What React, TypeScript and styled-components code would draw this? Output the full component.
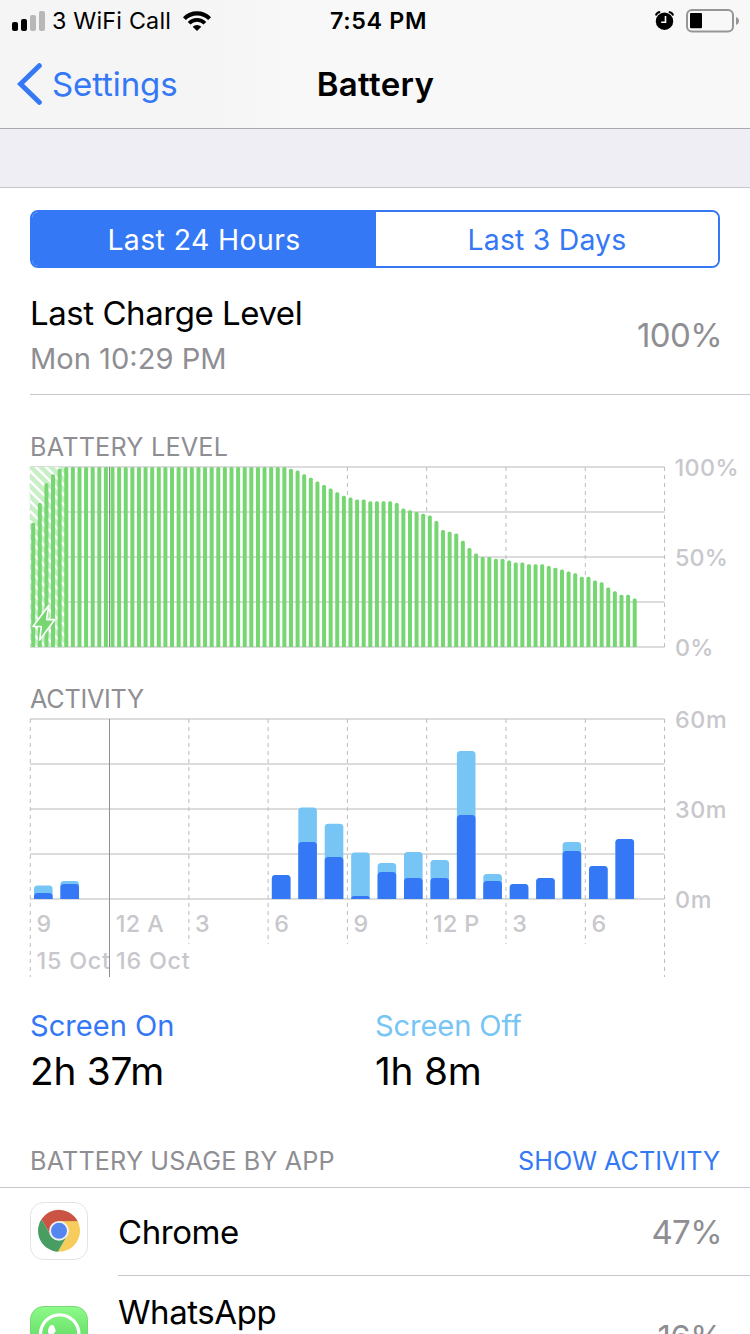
import React from "react";
import styled, { createGlobalStyle } from "styled-components";

const BLUE = "#3478f6";
const SKY = "#76c5f5";
const GREEN = "#76d672";
const GRAY = "#8e8e93";
const HAIRLINE = "#c8c7cc";

const GlobalStyle = createGlobalStyle`
  *, *::before, *::after { box-sizing: border-box; }
  html, body { margin: 0; height: 1334px; overflow: hidden; background: #fff; }
  body { font-family: Inter, "Liberation Sans", sans-serif; color: #000; }
`;

const Screen = styled.div`
  display: flex;
  flex-direction: column;
  width: 750px;
  height: 1334px;
  overflow: hidden;
  background: #fff;
  white-space: nowrap;
`;

const Header = styled.header`
  flex: none;
  height: 129px;
  border-bottom: 1px solid #a9a9ac;
  background: linear-gradient(90deg, #f5f5f5 0, #f5f5f5 200px, #f8f8f8 300px);
`;

const StatusBar = styled.div`
  display: grid;
  grid-template-columns: 1fr auto 1fr;
  align-items: center;
  height: 41px;
  padding: 0 10px 0 12px;
  font-size: 23.3px;
  line-height: 41px;
`;

const Carrier = styled.div`
  display: flex;
  align-items: center;
  letter-spacing: 0.2px;
`;

const CarrierName = styled.span`
  margin: 0 11px 0 7px;
`;

const Clock = styled.div`
  padding-left: 5px;
  font-weight: 600;
  letter-spacing: 0.65px;
`;

const StatusIcons = styled.div`
  display: flex;
  justify-content: flex-end;
  align-items: center;
  gap: 11px;
`;

const NavBar = styled.nav`
  display: grid;
  grid-template-columns: 1fr auto 1fr;
  align-items: center;
  height: 87px;
  padding: 0 17px;
  line-height: 87px;
`;

const Back = styled.a`
  display: flex;
  align-items: center;
  gap: 10px;
  color: ${BLUE};
  font-size: 33px;
  letter-spacing: -0.1px;

  svg {
    margin-bottom: 2px;
  }
`;

const Title = styled.h1`
  margin: 0;
  padding-left: 1px;
  font-size: 33px;
  font-weight: 600;
  letter-spacing: 0.35px;
`;

const Gap = styled.div`
  flex: none;
  height: 59px;
  border-bottom: 1px solid ${HAIRLINE};
  background: #efeef4;
`;

const Segments = styled.div`
  flex: none;
  display: grid;
  grid-template-columns: 344px 1fr;
  height: 58px;
  margin: 22px 30px 0;
  overflow: hidden;
  border: 2px solid ${BLUE};
  border-radius: 8px;
`;

const Segment = styled.button<{ $active?: boolean }>`
  border: 0;
  padding: 2px 0 0;
  font: 400 28.4px/52px Inter, "Liberation Sans", sans-serif;
  letter-spacing: ${(p) => (p.$active ? 0.4 : 0.2)}px;
  color: ${(p) => (p.$active ? "#fff" : BLUE)};
  background: ${(p) => (p.$active ? BLUE : "#fff")};
`;

const ChargeRow = styled.section`
  flex: none;
  display: flex;
  justify-content: space-between;
  align-items: center;
  height: 127px;
  margin-left: 30px;
  padding: 8px 30px 0 0;
  border-bottom: 1px solid ${HAIRLINE};
`;

const ChargeTitle = styled.div`
  font-size: 33px;
  line-height: 44px;
  letter-spacing: -0.45px;
`;

const ChargeTime = styled.div`
  margin-top: 4px;
  font-size: 29.1px;
  line-height: 40px;
  color: ${GRAY};
`;

const Percent = styled.div`
  margin-right: -2px;
  font-size: 33px;
  line-height: 44px;
  letter-spacing: -0.6px;
  color: ${GRAY};
`;

const ChartBlock = styled.section<{ $top: number }>`
  flex: none;
  padding: ${(p) => p.$top}px 0 0 30px;
`;

const Caption = styled.h2<{ $spacing: number }>`
  margin: 0;
  font-size: 25.2px;
  font-weight: 400;
  line-height: 32px;
  letter-spacing: ${(p) => p.$spacing}px;
  color: ${GRAY};
`;

const Chart = styled.svg`
  display: block;
  width: 720px;
  overflow: visible;

  text {
    font: 500 23.3px Inter, "Liberation Sans", sans-serif;
    fill: #c7c7cc;
  }
`;

const Totals = styled.section`
  flex: none;
  display: grid;
  grid-template-columns: 1fr 1fr;
  padding: 28px 30px 0;
`;

const TotalLabel = styled.div<{ $color: string; $spacing: number }>`
  font-size: 29.1px;
  line-height: 36px;
  letter-spacing: ${(p) => p.$spacing}px;
  color: ${(p) => p.$color};
`;

const TotalValue = styled.div`
  margin: 3px 0 1px;
  font-size: 38.8px;
  line-height: 48px;
  letter-spacing: -0.25px;
`;

const ListHeader = styled.div`
  flex: none;
  display: flex;
  justify-content: space-between;
  align-items: flex-end;
  height: 92px;
  padding: 0 30px 10px;
  border-bottom: 1px solid ${HAIRLINE};
`;

const ShowActivity = styled.a`
  font-size: 25.2px;
  line-height: 32px;
  color: ${BLUE};
`;

const AppRow = styled.div<{ $tall?: boolean }>`
  flex: none;
  display: flex;
  height: ${(p) => (p.$tall ? 122 : 88)}px;
  padding-left: 30px;
`;

const AppIcon = styled.svg<{ $tall?: boolean }>`
  flex: none;
  width: 58px;
  height: 58px;
  margin-top: ${(p) => (p.$tall ? 30 : 14)}px;
`;

const AppBody = styled.div`
  flex: 1;
  display: flex;
  justify-content: space-between;
  align-items: center;
  margin-left: 30px;
  padding-right: 30px;
  border-bottom: 1px solid ${HAIRLINE};
`;

const AppName = styled.div<{ $tall?: boolean }>`
  align-self: ${(p) => (p.$tall ? "flex-start" : "center")};
  margin-top: ${(p) => (p.$tall ? 14 : 0)}px;
  font-size: 33px;
  line-height: 44px;
  letter-spacing: -0.43px;
`;

/* Chart geometry, in the chart's own pixels */
const TOP = 4;
const WIDTH = 634.5;
const HEIGHT = 180;
const BASE = TOP + HEIGHT;

/* battery percentage, one value per quarter of an hour */
const levels: number[] = [
  69, 80, 91, 96, 99, ...Array(34).fill(100),
  99, 98, 96, 94, 92, 90, 88, 86, 84, 83, 82, 82, 81, 81, 81, 81, 80, 77, 76, 75, 74, 73, 70, 65, 64, 63, 59, 55,
  52, 50, 50, 49, 49, 48, 47, 47, 46, 46, 46, 45, 44, 43, 42, 41, 39, 39, 37, 36, 33, 31, 29, 29, 27,
];

/* hour slot, minutes with screen on, minutes in total */
const activity: [number, number, number][] = [
  [0, 2, 4.5], [1, 5, 6], [9, 8, 8], [10, 19, 30.5], [11, 14, 25.1], [12, 1, 15.5], [13, 9, 12],
  [14, 7, 15.7], [15, 7, 13], [16, 28, 49.3], [17, 6, 8.3], [18, 5, 5], [19, 7, 7], [20, 16, 19],
  [21, 11, 11], [22, 20, 20],
];

const hours = ["9", "12 A", "3", "6", "9", "12 P", "3", "6"];
const tickX = (i: number) => 0.3 + i * 79.28;
const levelY = (v: number) => BASE - v * 1.8;

/* ticks of the battery chart end where the bars begin */
const batteryTicks = Array.from({ length: 9 }, (_, i) => (i === 8 ? BASE : levelY(levels[Math.max(i * 12, 0)])));
const activityTicks = [262, 262, 229, 229, 229, 229, 229, 229, 262];

function GridRows() {
  return (
    <>
      {[0, 1, 2, 3, 4].map((i) => (
        <rect key={i} x={0} y={TOP - 1 + i * 45} width={WIDTH} height={2} fill="#dcdcdc" />
      ))}
    </>
  );
}

function Ticks({ bottoms }: { bottoms: number[] }) {
  return (
    <>
      {bottoms.map((bottom, i) =>
        i === 1 ? null : (
          <line key={i} x1={tickX(i)} x2={tickX(i)} y1={TOP} y2={bottom} stroke="#bcbcbe" strokeDasharray="4 4" />
        ),
      )}
    </>
  );
}

function topRounded(x: number, y: number, w: number, r: number) {
  const k = Math.min(r, BASE - y);
  return `M${x} ${BASE}V${y + k}q0 ${-k} ${k} ${-k}h${w - 2 * k}q${k} 0 ${k} ${k}V${BASE}z`;
}

function BatteryChart() {
  return (
    <Chart height={190} viewBox="0 0 720 190">
      <defs>
        <clipPath id="charging">
          <rect x={0} y={TOP} width={38.5} height={HEIGHT} />
        </clipPath>
      </defs>
      <GridRows />
      <Ticks bottoms={batteryTicks} />
      <g clipPath="url(#charging)">
        <rect x={0} y={TOP} width={38.5} height={HEIGHT} fill="#c9efc7" />
        {Array.from({ length: 24 }, (_, i) => (
          <path key={i} d={`M-2 ${TOP - 38 + i * 10}l44 44`} stroke="#fff" strokeWidth={2.5} />
        ))}
      </g>
      {levels.map((v, i) => (
        <path key={i} d={topRounded(1.2 + i * 6.61, levelY(v), 4, 1.5)} fill={GREEN} />
      ))}
      <rect x={79} y={TOP} width={1} height={HEIGHT} fill="#7f8c80" />
      <path
        d="M18.7 142.5L3 163.5h8.3L9.7 177 24.8 156.6h-8.2z"
        fill={GREEN}
        stroke="#fff"
        strokeWidth={1.6}
        strokeLinejoin="round"
      />
      <text x={644.5} y={12.5} letterSpacing={0.4}>100%</text>
      <text x={645} y={102.5} letterSpacing={0.1}>50%</text>
      <text x={645} y={192.5} letterSpacing={0.1}>0%</text>
    </Chart>
  );
}

function ActivityChart() {
  return (
    <Chart height={265} viewBox="0 0 720 265">
      <GridRows />
      <Ticks bottoms={activityTicks} />
      {activity.map(([slot, on, total]) => (
        <g key={slot}>
          <path d={topRounded(4 + slot * 26.43, BASE - total * 3, 18.6, 3.5)} fill={SKY} />
          <path d={topRounded(4 + slot * 26.43, BASE - on * 3, 18.6, 3.5)} fill={BLUE} />
        </g>
      ))}
      {hours.map((h, i) => (
        <text key={i} x={tickX(i) + 6.2} y={217} letterSpacing={0.4}>{h}</text>
      ))}
      <text x={6.5} y={253.5} letterSpacing={0.8}>15 Oct</text>
      <text x={86} y={253.5} letterSpacing={0.8}>16 Oct</text>
      <rect x={79} y={TOP} width={1} height={258} fill={GRAY} />
      <text x={645} y={12.5} letterSpacing={0.6}>60m</text>
      <text x={645} y={102.5} letterSpacing={0.6}>30m</text>
      <text x={645} y={192.5} letterSpacing={0.6}>0m</text>
    </Chart>
  );
}

function SignalIcon() {
  return (
    <svg width={33} height={20} viewBox="0 0 33 20">
      <rect x={0} y={11} width={6} height={9} rx={2} />
      <rect x={9} y={8} width={6} height={12} rx={2} />
      <rect x={18} y={4} width={6} height={16} rx={2} fill="#b8b8b8" />
      <rect x={27} y={0} width={6} height={20} rx={2} fill="#b8b8b8" />
    </svg>
  );
}

function WifiIcon() {
  return (
    <svg width={30} height={20} viewBox="-15 -20 30 20">
      <path d="M-12.6-12.4A17.8 17.8 0 0 1 12.6-12.4" fill="none" stroke="#000" strokeWidth={4.1} />
      <path d="M-7.9-7.7A11 11 0 0 1 7.9-7.7" fill="none" stroke="#000" strokeWidth={3.8} />
      <path d="M0 0L-4.3-4.2A6 6 0 0 1 4.3-4.2z" />
    </svg>
  );
}

function AlarmIcon() {
  return (
    <svg width={20} height={20} viewBox="0 0 20 20">
      <circle cx={9.5} cy={10.2} r={8.7} />
      <path d="M0.900 4.400Q1.700 1.400 5.200 1.100M18.100 4.400Q17.300 1.400 13.800 1.100" fill="none" stroke="#000" strokeWidth={2} />
      <path d="M10.500 5v6.200H6.200" fill="none" stroke="#fff" strokeWidth={1.6} />
    </svg>
  );
}

function BatteryIcon() {
  return (
    <svg width={54} height={24} viewBox="0 0 54 24">
      <rect x={1} y={1} width={46} height={21.5} rx={5} fill="none" stroke="#969698" strokeWidth={2} />
      <rect x={4} y={4} width={12} height={15.3} rx={1} />
      <path d="M50 8q3 1.2 3 4t-3 4z" fill="#969698" />
    </svg>
  );
}

function ChromeIcon() {
  return (
    <AppIcon viewBox="0 0 58 58">
      <rect x={0.5} y={0.5} width={57} height={57} rx={13} fill="#fff" stroke="#e3e3e3" />
      <g transform="translate(29 28.8)">
        <path d="M-17.58-11.44A21 21 0 0 1 18.7-9.5H0L-8.23 4.75z" fill="#cb5343" />
        <path d="M18.7-9.5A21 21 0 0 1-1.12 20.94L8.23 4.75 0-9.5z" fill="#f6cd5c" />
        <path d="M-1.12 20.94A21 21 0 0 1-17.58-11.44L-8.23 4.75 8.23 4.75z" fill="#489d63" />
        <path d="M3-9.5H18.7L19-8.700H6z" fill="#e3b852" />
        <circle r={9.9} fill="#f2f2f2" />
        <circle r={8} fill="#5585ee" />
      </g>
    </AppIcon>
  );
}

function WhatsAppIcon() {
  return (
    <AppIcon $tall viewBox="0 0 58 58">
      <defs>
        <linearGradient id="wa" x1="0" y1="0" x2="0" y2="1">
          <stop offset="0" stopColor="#8dfa89" />
          <stop offset="1" stopColor="#4bc94f" />
        </linearGradient>
      </defs>
      <rect x={0.5} y={0.5} width={57} height={57} rx={13} fill="url(#wa)" stroke="#78d876" />
      <circle cx={29.7} cy={28} r={19.2} fill="none" stroke="#fff" strokeWidth={3.2} />
      <path
        d="M20.3 19.6q1.8-1.4 3.4 0l2 4.6q.3 1.2-1.8 3.4 3.2 6 9.4 8.3l2.6-3q1-.6 5.6 2.2 1 5.6-5.8 6.2-13.5-3-17.7-15.3-.5-3.6 2.300-6.400z"
        fill="#fff"
      />
    </AppIcon>
  );
}

export default function App() {
  return (
    <Screen>
      <GlobalStyle />
      <Header>
        <StatusBar>
          <Carrier>
            <SignalIcon />
            <CarrierName>3 WiFi Call</CarrierName>
            <WifiIcon />
          </Carrier>
          <Clock>7:54 PM</Clock>
          <StatusIcons>
            <AlarmIcon />
            <BatteryIcon />
          </StatusIcons>
        </StatusBar>
        <NavBar>
          <Back>
            <svg width={25} height={42} viewBox="0 0 25 42">
              <path d="M22.3 2.7L3.500 21l18.800 18.300" fill="none" stroke={BLUE} strokeWidth={5} strokeLinecap="round" />
            </svg>
            Settings
          </Back>
          <Title>Battery</Title>
        </NavBar>
      </Header>
      <Gap />
      <Segments>
        <Segment $active>Last 24 Hours</Segment>
        <Segment>Last 3 Days</Segment>
      </Segments>
      <ChargeRow>
        <div>
          <ChargeTitle>Last Charge Level</ChargeTitle>
          <ChargeTime>Mon 10:29 PM</ChargeTime>
        </div>
        <Percent>100%</Percent>
      </ChargeRow>
      <ChartBlock $top={36}>
        <Caption $spacing={0.22}>BATTERY LEVEL</Caption>
        <BatteryChart />
      </ChartBlock>
      <ChartBlock $top={30}>
        <Caption $spacing={-0.25}>ACTIVITY</Caption>
        <ActivityChart />
      </ChartBlock>
      <Totals>
        <div>
          <TotalLabel $color={BLUE} $spacing={0}>Screen On</TotalLabel>
          <TotalValue>2h 37m</TotalValue>
        </div>
        <div>
          <TotalLabel $color={SKY} $spacing={-0.1}>Screen Off</TotalLabel>
          <TotalValue>1h 8m</TotalValue>
        </div>
      </Totals>
      <ListHeader>
        <Caption $spacing={0.15}>BATTERY USAGE BY APP</Caption>
        <ShowActivity>SHOW ACTIVITY</ShowActivity>
      </ListHeader>
      <AppRow>
        <ChromeIcon />
        <AppBody>
          <AppName>Chrome</AppName>
          <Percent>47%</Percent>
        </AppBody>
      </AppRow>
      <AppRow $tall>
        <WhatsAppIcon />
        <AppBody>
          <AppName $tall>WhatsApp</AppName>
          <Percent>16%</Percent>
        </AppBody>
      </AppRow>
    </Screen>
  );
}
